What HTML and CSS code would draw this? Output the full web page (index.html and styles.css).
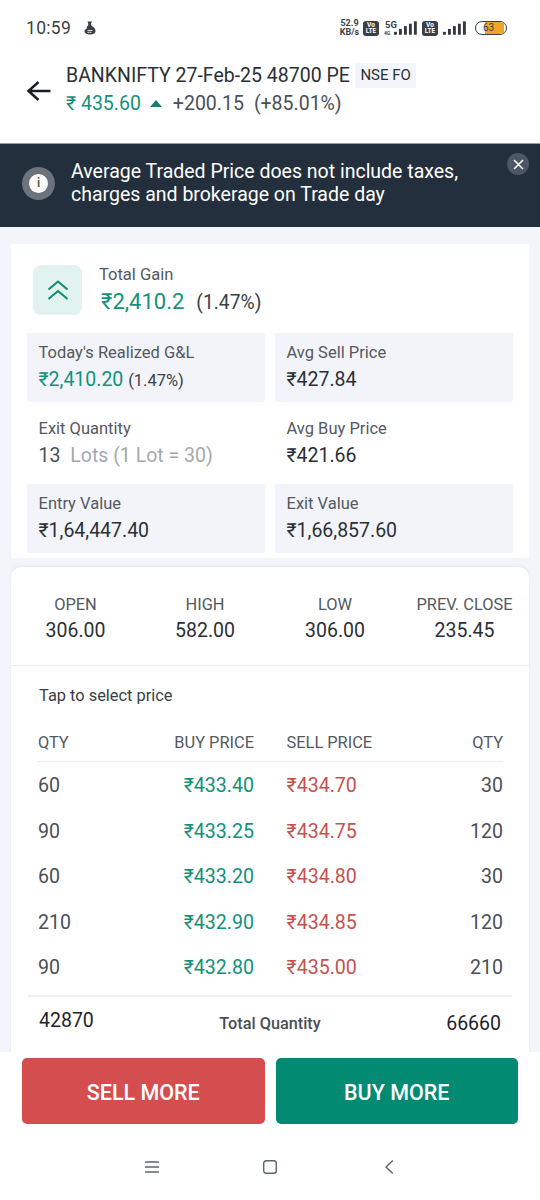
FILE: index.html
```html
<!DOCTYPE html>
<html lang="en">
<head>
<meta charset="utf-8">
<title>BANKNIFTY position</title>
<link rel="stylesheet" href="styles.css">
</head>
<body>
<div class="phone">
  <div class="top">
    <div class="status">
      <div class="status-left">
        <span class="clock">10:59</span>
        <svg class="notif" width="12" height="14" viewBox="0 0 12 14"><path d="M3.500 .5h4.500L6.800 3.200c.8.300 1 1 .5 1.500 2.500 1 4.500 3.300 4.200 5.800-.3 2.200-2.600 3-5.500 3S.8 12.700.5 10.800C.3 9.300 1.300 8 3 7.400 2.300 6.500 2.700 5.200 4 4.700 4.500 3.800 4.300 2.200 3.500.5z" fill="#3a3f44"/><path d="M3.500 9.500h5M3.500 11.300h4" stroke="#fff" stroke-width=".8"/></svg>
      </div>
      <div class="status-right">
        <span class="speed"><span>52.9</span><span>KB/s</span></span>
        <span class="volte"><span>Vo</span><span>LTE</span></span>
        <span class="net-tag"><span class="net-5g">5G</span><span class="net-4g">4G</span></span>
        <svg class="bars" width="24" height="15" viewBox="0 0 24 15"><g fill="#33383d"><rect x="0" y="11" width="3" height="3"/><rect x="5.200" y="8" width="3" height="6"/><rect x="10.400" y="5" width="3" height="9"/><rect x="15.600" y="2.500" width="3" height="11.500"/><rect x="20.800" y="0" width="3" height="14"/></g></svg>
        <span class="volte volte-2"><span>Vo</span><span>LTE</span></span>
        <svg class="bars bars-2" width="24" height="15" viewBox="0 0 24 15"><g fill="#33383d"><rect x="0" y="11" width="3" height="3"/><rect x="5.200" y="8" width="3" height="6"/><rect x="10.400" y="5" width="3" height="9"/><rect x="15.600" y="2.500" width="3" height="11.500"/><rect x="20.800" y="0" width="3" height="14"/></g></svg>
        <span class="battery"><span class="battery-fill"></span><span class="battery-num">63</span></span>
      </div>
    </div>
    <header class="header">
      <svg class="back" width="26" height="24" viewBox="0 0 26 24"><path d="M24.500 12H3M12.500 3l-10 9 10 9" fill="none" stroke="#1c2025" stroke-width="2.500"/></svg>
      <div class="title-wrap">
        <div class="title-row"><span class="title">BANKNIFTY 27-Feb-25 48700 PE</span><span class="tag">NSE FO</span></div>
        <div class="price-row">
          <span class="ltp">₹ 435.60</span>
          <span class="caret"></span>
          <span class="chg">+200.15</span>
          <span class="chg">(+85.01%)</span>
        </div>
      </div>
    </header>
  </div>

  <section class="banner">
    <span class="info-ring"><span class="info-dot">i</span></span>
    <p class="banner-text">Average Traded Price does not include taxes, charges and brokerage on Trade day</p>
    <span class="close-btn"><svg width="11" height="11" viewBox="0 0 11 11"><path d="M1 1l9 9M10 1l-9 9" stroke="#fff" stroke-width="1.500"/></svg></span>
  </section>

  <main class="content">
    <section class="gain-card">
      <div class="gain-head">
        <span class="gain-icon"><svg width="22" height="22" viewBox="0 0 22 22"><path d="M1.500 10.500L11 2.500l9.500 8M1.500 20L11 12l9.500 8" fill="none" stroke="#0f8d73" stroke-width="2.100"/></svg></span>
        <div>
          <div class="label">Total Gain</div>
          <div class="gain-val"><span class="gain-num">₹2,410.2</span><span class="gain-pct">(1.47%)</span></div>
        </div>
      </div>
      <div class="grid">
        <div class="cell shaded"><div class="label">Today's Realized G&amp;L</div><div class="val"><span class="green">₹2,410.20</span> <small>(1.47%)</small></div></div>
        <div class="cell shaded"><div class="label">Avg Sell Price</div><div class="val">₹427.84</div></div>
        <div class="cell plain"><div class="label">Exit Quantity</div><div class="val"><span class="qty-num">13</span> <span class="muted">Lots (1 Lot = 30)</span></div></div>
        <div class="cell plain"><div class="label">Avg Buy Price</div><div class="val">₹421.66</div></div>
        <div class="cell shaded"><div class="label">Entry Value</div><div class="val">₹1,64,447.40</div></div>
        <div class="cell shaded"><div class="label">Exit Value</div><div class="val">₹1,66,857.60</div></div>
      </div>
    </section>

    <section class="market-card">
      <div class="ohlc">
        <div class="ohlc-item"><div class="ohlc-label">OPEN</div><div class="ohlc-val">306.00</div></div>
        <div class="ohlc-item"><div class="ohlc-label">HIGH</div><div class="ohlc-val">582.00</div></div>
        <div class="ohlc-item"><div class="ohlc-label">LOW</div><div class="ohlc-val">306.00</div></div>
        <div class="ohlc-item"><div class="ohlc-label">PREV. CLOSE</div><div class="ohlc-val">235.45</div></div>
      </div>
      <div class="depth">
        <div class="tap">Tap to select price</div>
        <div class="row row-head"><span>QTY</span><span class="r">BUY PRICE</span><span class="sp">SELL PRICE</span><span class="r">QTY</span></div>
        <div class="row"><span>60</span><span class="r green">₹433.40</span><span class="sp red">₹434.70</span><span class="r">30</span></div>
        <div class="row"><span>90</span><span class="r green">₹433.25</span><span class="sp red">₹434.75</span><span class="r">120</span></div>
        <div class="row"><span>60</span><span class="r green">₹433.20</span><span class="sp red">₹434.80</span><span class="r">30</span></div>
        <div class="row"><span>210</span><span class="r green">₹432.90</span><span class="sp red">₹434.85</span><span class="r">120</span></div>
        <div class="row"><span>90</span><span class="r green">₹432.80</span><span class="sp red">₹435.00</span><span class="r">210</span></div>
        <div class="totals"><span class="tot-l">42870</span><span class="tot-m">Total Quantity</span><span class="tot-r">66660</span></div>
      </div>
    </section>
  </main>

  <footer class="footer">
    <div class="actions">
      <button class="btn sell">SELL MORE</button>
      <button class="btn buy">BUY MORE</button>
    </div>
    <nav class="nav">
      <svg width="16" height="14" viewBox="0 0 16 14"><path d="M1 2h14M1 7h14M1 12h14" stroke="#5e6469" stroke-width="1.300"/></svg>
      <svg width="16" height="16" viewBox="0 0 16 16"><rect x="1.700" y="1.700" width="12.600" height="12.600" rx="2.500" fill="none" stroke="#5e6469" stroke-width="1.400"/></svg>
      <svg class="nav-back" width="12" height="16" viewBox="0 0 12 16"><path d="M9.800 1.500L3 8l6.800 6.500" fill="none" stroke="#5e6469" stroke-width="1.400"/></svg>
    </nav>
  </footer>
</div>
</body>
</html>
```

FILE: styles.css
```css
* { box-sizing: border-box; }
html, body { margin: 0; padding: 0; }
body { font-family: Roboto, "Noto Sans", sans-serif; color: #23282d; background: #fff; }
.phone { width: 540px; height: 1200px; display: flex; flex-direction: column; overflow: hidden; background: #f3f5fb; }
.top { background: #fff; height: 143px; flex: none; }
.status { height: 56px; display: flex; justify-content: space-between; align-items: center; padding: 0 33px 0 26px; }
.status-left { display: flex; align-items: center; gap: 13px; }
.clock { font-size: 17.500px; color: #3a3f44; letter-spacing: .3px; }
.status-right { display: flex; align-items: center; gap: 3px; height: 18px; }
.speed { display: flex; flex-direction: column; width: 21px; font-size: 9px; line-height: 9px; font-weight: 700; color: #3a3f44; align-items: center; white-space: nowrap; }
.volte { display: flex; flex-direction: column; align-items: center; width: 16px; height: 15px; background: #3a3f44; border-radius: 3px; color: #fff; font-size: 6.500px; line-height: 6.500px; font-weight: 700; padding-top: 1px; }
.volte-2 { margin-left: 2px; }
.net-tag { display: flex; flex-direction: column; align-items: center; margin-left: 2px; margin-right: -7px; width: 14px; }
.net-5g { font-size: 9.500px; line-height: 10px; font-weight: 700; color: #3a3f44; }
.net-4g { font-size: 5px; line-height: 6px; font-weight: 700; color: #3a3f44; align-self: flex-start; }
.bars { width: 23px; height: 15px; }
.bars-2 { margin-left: 2px; }
.battery { position: relative; display: block; width: 32px; height: 14px; margin-left: 6px; border: 1.500px solid #3a3f44; border-radius: 7px; overflow: hidden; }
.battery-fill { display: block; width: 62%; height: 100%; background: #eda62a; margin-left: 30%; }
.battery-num { position: absolute; inset: 0; text-align: center; font-size: 10px; line-height: 11px; color: #3a3f44; padding-right: 5px; }
.header { display: flex; align-items: center; padding: 0 0 0 26px; height: 65px; gap: 14px; }
.back { margin-top: 5px; }
.title-wrap { display: flex; flex-direction: column; gap: 3px; }
.title-row { display: flex; align-items: center; gap: 5px; height: 26px; }
.title { font-size: 19.500px; color: #2b3036; white-space: nowrap; }
.tag { background: #f3f5fb; font-size: 15px; padding: 0 5.500px; height: 25px; line-height: 25px; color: #2b3036; white-space: nowrap; }
.price-row { display: flex; align-items: center; font-size: 19.500px; color: #4a5056; height: 24px; }
.ltp { color: #13917a; }
.caret { width: 0; height: 0; border-left: 6.500px solid transparent; border-right: 6.500px solid transparent; border-bottom: 7px solid #13806c; margin: 0 11px 0 9px; }
.chg { margin-right: 10px; }
.banner { position: relative; background: #242f3e; border-top: 1px solid #9aa0a6; height: 84px; display: flex; align-items: center; padding: 0 40px 5px 22px; gap: 16px; flex: none; }
.info-ring { width: 33px; height: 33px; border-radius: 50%; background: #6d737c; display: flex; align-items: center; justify-content: center; flex: none; }
.info-dot { width: 19px; height: 19px; border-radius: 50%; background: #fff; color: #6b5a50; font-size: 12px; line-height: 19px; font-weight: 700; text-align: center; }
.banner-text { margin: 0; color: #fff; font-size: 19.500px; line-height: 23px; }
.close-btn { position: absolute; top: 9px; right: 11px; width: 22px; height: 22px; border-radius: 50%; background: #4d5664; display: flex; align-items: center; justify-content: center; }
.content { flex: 1; padding: 17px 11px 0; display: flex; flex-direction: column; gap: 9px; min-height: 0; overflow: hidden; }
.gain-card { background: #fff; height: 314px; flex: none; padding: 21px 16px 0; }
.gain-head { display: flex; align-items: center; gap: 17px; padding-left: 6px; height: 50px; }
.gain-icon { width: 49px; height: 50px; border-radius: 8px; background: #e2f2ee; display: flex; align-items: center; justify-content: center; }
.label { font-size: 16.500px; line-height: 19px; color: #54595f; white-space: nowrap; }
.gain-val { display: flex; align-items: baseline; gap: 12px; margin-top: 5px; padding-left: 2px; }
.gain-num { font-size: 22px; line-height: 26px; color: #13917a; }
.gain-pct { font-size: 19.300px; color: #3a3f44; }
.grid { display: grid; grid-template-columns: 238px 238px; grid-template-rows: 69px 82px 69px; column-gap: 10px; margin-top: 18px; }
.cell { padding: 10px 11.500px 0; border-radius: 2px; }
.cell.plain { padding-top: 17px; }
.cell.shaded { background: #f2f4f9; }
.cell .val { font-size: 19.500px; line-height: 24px; margin-top: 6px; color: #2b3036; white-space: nowrap; }
.cell .val small { font-size: 16.500px; color: #3a3f44; }
.qty-num { color: #4a5056; margin-right: 5px; }
.muted { color: #a4a9ae; }
.green { color: #13917a; }
.red { color: #c8504e; }
.market-card { background: #fff; border-radius: 10px 10px 0 0; flex: 1; min-height: 0; overflow: hidden; box-shadow: 0 -1px 3px rgba(120, 130, 150, .12); }
.ohlc { display: grid; grid-template-columns: 129px 130px 130px 129px; height: 99px; border-bottom: 1px solid #ececf0; padding-top: 28px; }
.ohlc-item { text-align: center; }
.ohlc-label { font-size: 16.400px; line-height: 19px; color: #54595f; }
.ohlc-val { font-size: 19.500px; line-height: 24px; margin-top: 5px; color: #2b3036; }
.depth { padding: 0 17px; }
.tap { font-size: 16.400px; line-height: 19px; color: #3a3f44; margin: 20px 0 0 11px; }
.row { display: grid; grid-template-columns: 96px 120px 130px 119px; margin: 0 9px 0 10px; padding-right: 3px; font-size: 19.600px; color: #4a5056; height: 45.500px; align-items: center; }
.sp { padding-left: 32.500px; white-space: nowrap; }
.r { text-align: right; }
.row-head { font-size: 16.400px; color: #54595f; height: 43px; margin-top: 14px; margin-bottom: 1px; border-bottom: 1px solid #ececf0; padding-top: 5px; white-space: nowrap; }
.totals { display: flex; justify-content: space-between; align-items: flex-start; border-top: 2px solid #eceef2; margin-top: 4px; padding: 12px 11px 0; font-size: 19.500px; color: #1f2429; }
.tot-l { line-height: 24px; }
.tot-m { font-size: 16.300px; font-weight: 500; color: #4a5056; line-height: 30px; }
.tot-r { line-height: 30px; font-weight: 400; }
.footer { background: #fff; height: 148px; flex: none; }
.actions { display: flex; gap: 11px; padding: 6px 22px 0; }
.btn { flex: 1; height: 66px; border: 0; border-radius: 5px; padding: 2px 0 0; color: #fff; font: 500 21.500px Roboto, sans-serif; }
.sell { background: #d54e4f; }
.buy { background: #038a72; }
.nav { display: flex; justify-content: flex-start; gap: 102px; align-items: center; height: 76px; padding: 10px 0 0 144px; }
.nav-back { margin-left: 3px; }
```
